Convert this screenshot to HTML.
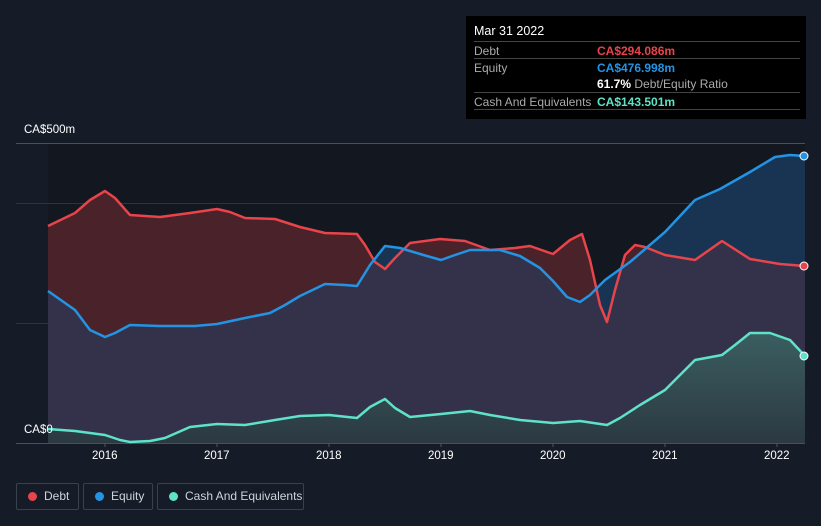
<!DOCTYPE html>
<html><head><meta charset="utf-8"><style>
html,body{margin:0;width:821px;height:526px;overflow:hidden}
body{background:#161c27;font-family:"Liberation Sans",sans-serif;position:relative}
.tt{position:absolute;left:466px;top:16px;width:340px;height:103px;background:#000;color:#fff;font-size:12px;white-space:nowrap}
.tt .h{position:absolute;left:8px;top:8px;font-size:12.5px}
.tt .r{position:absolute;left:8px;width:326px;border-top:1px solid #444;height:17px}
.tt .l{position:absolute;left:0;top:2px;color:#aaa}
.tt .v{position:absolute;left:123px;top:2px;font-weight:bold}
.lg{position:absolute;top:483px;height:27px;border:1px solid #3a404c;border-radius:2px;color:#cfd3da;font-size:12px;box-sizing:border-box;line-height:25px;white-space:nowrap}
.lg i{position:absolute;left:11px;top:8px;width:9px;height:9px;border-radius:50%}
.lg span{position:absolute;left:27px}
.ax{position:absolute;color:#fff;font-size:11.5px;white-space:nowrap}
</style></head><body>
<svg width="821" height="526" style="position:absolute;left:0;top:0">
<defs>
<clipPath id="eqc"><path d="M48,291 L75,310 L90,330 L105,337 L115,333 L130,325 L160,326 L195,326 L217,324 L245,318 L270,313 L285,305 L300,296 L325,284 L345,285 L357,286 L370,265 L385,246 L400,248 L420,254 L441,260 L455,255 L470,250 L500,250 L520,256 L540,268 L553,281 L567,297 L580,302 L590,295 L605,280 L630,262 L665,232 L695,200 L720,189 L750,172 L775,157 L790,155 L805,156 L805,443 L48,443Z"/></clipPath>
<linearGradient id="cg" x1="0" y1="0" x2="0" y2="1"><stop offset="0" stop-color="#3c6664"/><stop offset="1" stop-color="#2a3a40"/></linearGradient>
</defs>
<rect x="48" y="143" width="757" height="300" fill="#121720"/>
<g stroke="#2e333d" stroke-width="1"><line x1="16" y1="143.5" x2="805" y2="143.5" stroke="#4a4f58"/><line x1="16" y1="203.5" x2="805" y2="203.5"/><line x1="16" y1="323.5" x2="805" y2="323.5"/><line x1="16" y1="443.5" x2="805" y2="443.5" stroke="#4a4f58"/></g>
<path d="M48,226 L75,213 L90,200 L105,191 L115,198 L130,215 L160,217 L190,213 L217,209 L230,212 L245,218 L275,219 L300,227 L325,233 L357,234 L365,245 L375,262 L385,269 L395,258 L410,243 L440,239 L465,241 L490,250 L515,248 L530,246 L553,254 L570,240 L582,234 L590,260 L600,305 L607,322 L615,290 L625,255 L635,245 L645,247 L665,255 L695,260 L722,241 L750,259 L780,264 L805,266 L805,443 L48,443Z" fill="#4a2229"/>
<path d="M48,291 L75,310 L90,330 L105,337 L115,333 L130,325 L160,326 L195,326 L217,324 L245,318 L270,313 L285,305 L300,296 L325,284 L345,285 L357,286 L370,265 L385,246 L400,248 L420,254 L441,260 L455,255 L470,250 L500,250 L520,256 L540,268 L553,281 L567,297 L580,302 L590,295 L605,280 L630,262 L665,232 L695,200 L720,189 L750,172 L775,157 L790,155 L805,156 L805,443 L48,443Z" fill="#183452"/>
<path d="M48,226 L75,213 L90,200 L105,191 L115,198 L130,215 L160,217 L190,213 L217,209 L230,212 L245,218 L275,219 L300,227 L325,233 L357,234 L365,245 L375,262 L385,269 L395,258 L410,243 L440,239 L465,241 L490,250 L515,248 L530,246 L553,254 L570,240 L582,234 L590,260 L600,305 L607,322 L615,290 L625,255 L635,245 L645,247 L665,255 L695,260 L722,241 L750,259 L780,264 L805,266 L805,443 L48,443Z" fill="#34324a" clip-path="url(#eqc)"/>
<path d="M48,429 L75,431 L105,435 L120,440 L130,442 L150,441 L165,438 L190,427 L217,424 L245,425 L275,420 L300,416 L329,415 L357,418 L370,407 L385,399 L395,408 L410,417 L441,414 L470,411 L490,415 L520,420 L553,423 L580,421 L607,425 L620,418 L640,405 L665,390 L680,375 L695,360 L722,355 L735,345 L750,333 L770,333 L790,340 L805,356 L805,443 L48,443Z" fill="url(#cg)" opacity="0.85"/>
<g fill="none" stroke-width="2.5" stroke-linejoin="round">
<polyline stroke="#e8444a" points="48,226 75,213 90,200 105,191 115,198 130,215 160,217 190,213 217,209 230,212 245,218 275,219 300,227 325,233 357,234 365,245 375,262 385,269 395,258 410,243 440,239 465,241 490,250 515,248 530,246 553,254 570,240 582,234 590,260 600,305 607,322 615,290 625,255 635,245 645,247 665,255 695,260 722,241 750,259 780,264 805,266"/>
<polyline stroke="#2394e4" points="48,291 75,310 90,330 105,337 115,333 130,325 160,326 195,326 217,324 245,318 270,313 285,305 300,296 325,284 345,285 357,286 370,265 385,246 400,248 420,254 441,260 455,255 470,250 500,250 520,256 540,268 553,281 567,297 580,302 590,295 605,280 630,262 665,232 695,200 720,189 750,172 775,157 790,155 805,156"/>
<polyline stroke="#5ee3c8" points="48,429 75,431 105,435 120,440 130,442 150,441 165,438 190,427 217,424 245,425 275,420 300,416 329,415 357,418 370,407 385,399 395,408 410,417 441,414 470,411 490,415 520,420 553,423 580,421 607,425 620,418 640,405 665,390 680,375 695,360 722,355 735,345 750,333 770,333 790,340 805,356"/>
</g>
<circle cx="804" cy="266" r="4" fill="#e8444a" stroke="#fff" stroke-width="1"/>
<circle cx="804" cy="156" r="4" fill="#2394e4" stroke="#fff" stroke-width="1"/>
<circle cx="804" cy="356" r="4" fill="#5ee3c8" stroke="#fff" stroke-width="1"/>
<g stroke="#555" ><line x1="105" y1="443" x2="105" y2="447"/><line x1="217" y1="443" x2="217" y2="447"/><line x1="329" y1="443" x2="329" y2="447"/><line x1="441" y1="443" x2="441" y2="447"/><line x1="553" y1="443" x2="553" y2="447"/><line x1="665" y1="443" x2="665" y2="447"/><line x1="777" y1="443" x2="777" y2="447"/></g>
</svg>
<div class="ax" style="left:24px;top:124px">CA$500m</div>
<div class="ax" style="left:24px;top:424px">CA$0</div>
<div class="ax" style="left:92px;top:450px">2016</div>
<div class="ax" style="left:204px;top:450px">2017</div>
<div class="ax" style="left:316px;top:450px">2018</div>
<div class="ax" style="left:428px;top:450px">2019</div>
<div class="ax" style="left:540px;top:450px">2020</div>
<div class="ax" style="left:652px;top:450px">2021</div>
<div class="ax" style="left:764px;top:450px">2022</div>
<div class="tt">
<div class="h">Mar 31 2022</div>
<div class="r" style="top:25px"><span class="l">Debt</span><span class="v" style="color:#e8444a">CA$294.086m</span></div>
<div class="r" style="top:42px"><span class="l">Equity</span><span class="v" style="color:#2394e4">CA$476.998m</span></div>
<div class="r" style="top:59px;border-top:none"><span class="v" style="color:#fff">61.7% <span style="color:#aaa;font-weight:normal">Debt/Equity Ratio</span></span></div>
<div class="r" style="top:76px"><span class="l">Cash And Equivalents</span><span class="v" style="color:#5ee3c8">CA$143.501m</span></div>
<div class="r" style="top:93px"></div>
</div>
<div class="lg" style="left:16px;width:63px"><i style="background:#e8444a"></i><span>Debt</span></div>
<div class="lg" style="left:83px;width:70px"><i style="background:#2394e4"></i><span>Equity</span></div>
<div class="lg" style="left:157px;width:147px"><i style="background:#5ee3c8"></i><span>Cash And Equivalents</span></div>
</body></html>
